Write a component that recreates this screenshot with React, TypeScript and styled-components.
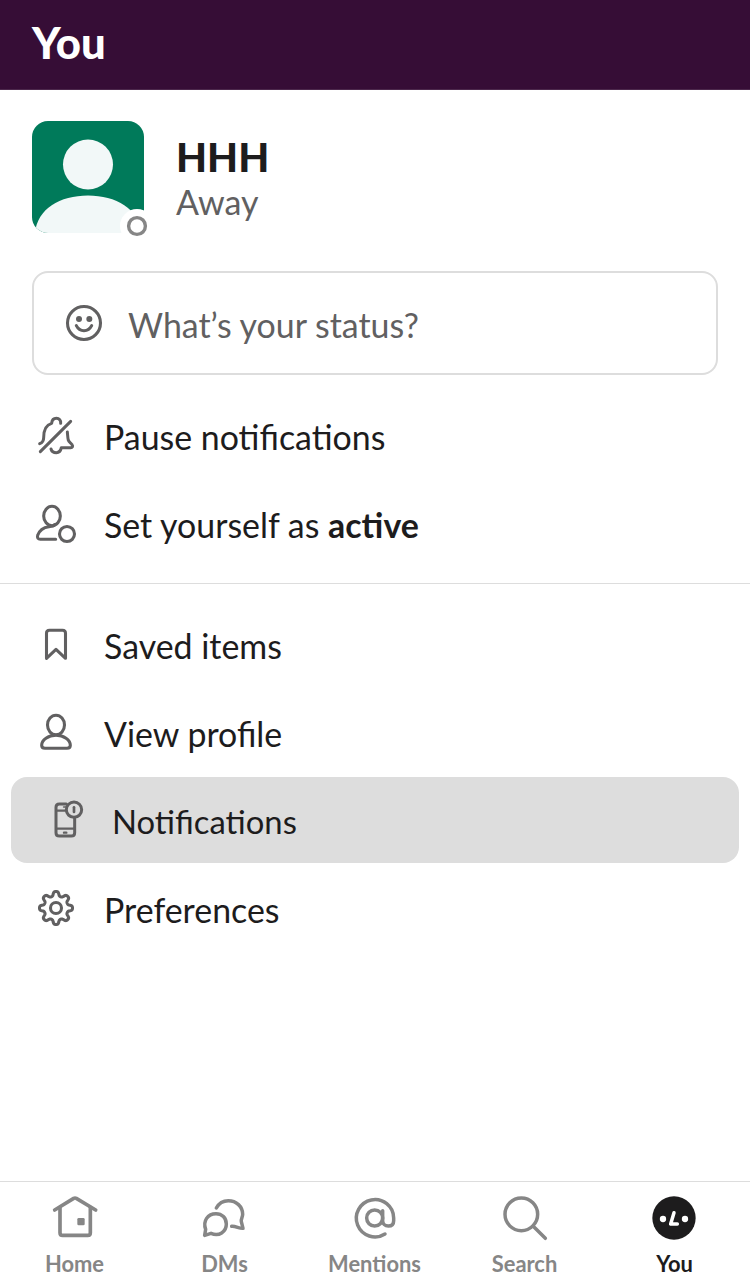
import React from 'react';
import styled, { createGlobalStyle } from 'styled-components';

const GlobalStyle = createGlobalStyle`
  * { box-sizing: border-box; }
  body {
    margin: 0;
    background: #fff;
    font-family: Lato, "Liberation Sans", sans-serif;
    color: #1d1c1d;
  }
`;

const Screen = styled.div`
  display: flex;
  flex-direction: column;
  width: 750px;
  height: 1280px;
  overflow: hidden;
  background: #fff;
`;

const Header = styled.header`
  height: 90px;
  padding: 16px 32px 0;
  background: #360d36;
  border-bottom: 1px solid #4c284c;
`;

const Title = styled.h1`
  margin: 0;
  color: #fff;
  font-size: 43.7px;
  font-weight: 900;
  line-height: 53px;
`;

const Profile = styled.section`
  display: flex;
  gap: 32px;
  padding: 31px 32px 0;
`;

const Avatar = styled.div`
  position: relative;
  width: 112px;
  height: 112px;
`;

const AvatarImage = styled.svg`
  display: block;
  width: 112px;
  height: 112px;
  border-radius: 16px;
`;

const Presence = styled.svg`
  position: absolute;
  left: 88px;
  top: 88px;
  width: 34px;
  height: 34px;
`;

const Identity = styled.div`
  padding-top: 12px;
`;

const Name = styled.div`
  font-size: 40.2px;
  font-weight: 900;
  line-height: 48px;
`;

const PresenceLabel = styled.div`
  color: #616061;
  font-size: 34px;
  line-height: 42px;
`;

const StatusField = styled.button`
  display: flex;
  align-items: center;
  gap: 20px;
  width: 686px;
  height: 104px;
  margin: 38px 32px 0;
  padding: 0 26px;
  border: 2px solid #dddddd;
  border-radius: 16px;
  background: #fff;
  color: #616061;
  font: inherit;
  font-size: 33.9px;
`;

const StatusPrompt = styled.span`
  padding-top: 4px;
`;

const Menu = styled.nav<{ $top: number }>`
  display: flex;
  flex-direction: column;
  padding-top: ${(p) => p.$top}px;
`;

const MenuRow = styled.a<{ $active?: boolean }>`
  display: flex;
  align-items: center;
  gap: 24px;
  height: ${(p) => (p.$active ? 86 : 88)}px;
  margin: ${(p) => (p.$active ? '0 11px 1px' : '0')};
  padding: 0 ${(p) => (p.$active ? 29 : 32)}px;
  border-radius: ${(p) => (p.$active ? 16 : 0)}px;
  background: ${(p) => (p.$active ? '#dddddd' : 'transparent')};
  font-size: ${(p) => (p.$active ? 32.8 : 33.9)}px;
`;

const MenuLabel = styled.span<{ $drop?: number }>`
  padding-top: ${(p) => p.$drop ?? 2}px;
`;

const Divider = styled.hr`
  width: 100%;
  height: 1px;
  margin: 15px 0 0;
  border: 0;
  background: #dddddd;
`;

const TabBar = styled.footer`
  display: grid;
  grid-template-columns: repeat(5, 1fr);
  height: 99px;
  margin-top: auto;
  border-top: 1px solid #dddddd;
`;

const Tab = styled.a<{ $active?: boolean }>`
  display: flex;
  flex-direction: column;
  align-items: center;
  padding: 12px 1px 0 0;
  color: ${(p) => (p.$active ? '#1d1c1d' : '#868686')};
  font-size: 21.9px;
  font-weight: 700;
  line-height: 26px;
  gap: 9px;
`;

const Glyph = styled.svg<{ $color?: string; $weight?: number }>`
  flex: none;
  width: 48px;
  height: 48px;
  color: ${(p) => p.$color ?? '#616061'};
  fill: none;
  stroke: currentColor;
  stroke-width: ${(p) => p.$weight ?? 9.2};
  stroke-linecap: round;
  stroke-linejoin: round;
`;

const TabGlyph = styled(Glyph)`
  position: relative;
  left: 0.5px;
`;

const SmileIcon = () => (
  <Glyph viewBox="120 117 144 144">
    <circle cx="192" cy="189" r="49.5" />
    <circle cx="177" cy="177" r="9" fill="currentColor" stroke="none" />
    <circle cx="208" cy="177" r="9" fill="currentColor" stroke="none" />
    <path d="M169 197c5 10 13 15 23 15s18-5 23-15" />
  </Glyph>
);

const BellOffIcon = () => (
  <Glyph viewBox="36 36 144 144" $weight={9}>
    <path d="M59 131c8-3 12-9 12-18 0-21 5-38 24-43 1-10 6-15 14-15 9 0 14 6 13 15" />
    <path d="M61 155L152 64" />
    <path d="M142 96c1 9 1 17 3 25 2 6 8 8 11 13 4 5 1 9-4 9h-28c-2 10-7 15-15 15s-14-4-16-11" />
  </Glyph>
);

const ActiveIcon = () => (
  <Glyph viewBox="36 300 144 144">
    <ellipse cx="96" cy="348" rx="25" ry="29" />
    <path d="M107 418H61c-7 0-10-5-8-12 5-15 18-24 34-26 10-2 16-1 17-6" />
    <circle cx="141" cy="402" r="22.5" />
  </Glyph>
);

const BookmarkIcon = () => (
  <Glyph viewBox="36 33 144 144">
    <path d="M79.500 145V70q0-9 9-9h39q9 0 9 9v75L108 118z" />
  </Glyph>
);

const PersonIcon = () => (
  <Glyph viewBox="36 297 144 144">
    <ellipse cx="108" cy="345" rx="25.500" ry="29.500" />
    <path d="M108 376c23 0 43 13 43 30 0 6-4 9-10 9H75c-6 0-10-3-10-9 0-17 20-30 43-30z" />
  </Glyph>
);

const PhoneAlertIcon = () => (
  <Glyph viewBox="120 93 144 144" $weight={9}>
    <path d="M199 117h-21q-10 0-10 10v76q0 10 10 10h36q10 0 10-10v-43" />
    <path d="M170 137h27M170 191h52" strokeWidth="7" />
    <path d="M191 126h6" strokeWidth="5" />
    <path d="M192 203h7" strokeWidth="7" />
    <circle cx="222" cy="134" r="23" />
    <path d="M222 127v14" strokeWidth="8" />
  </Glyph>
);

/* Eight-lobed cog outline: a flattened wave wrapped around a circle. */
const cogPath =
  Array.from({ length: 192 }, (_, i) => {
    const angle = (i / 192) * Math.PI * 2;
    const wave = Math.tanh(1.7 * Math.cos(8 * angle)) / Math.tanh(1.7);
    const radius = 43 + 6.5 * wave;
    const x = 108 + radius * Math.cos(angle);
    const y = 99 + radius * Math.sin(angle);
    return `${i ? 'L' : 'M'}${x.toFixed(2)} ${y.toFixed(2)}`;
  }).join('') + 'Z';

const CogIcon = () => (
  <Glyph viewBox="36 27 144 144">
    <path d={cogPath} />
    <circle cx="108" cy="99" r="16.500" />
  </Glyph>
);

const HomeIcon = () => (
  <TabGlyph viewBox="153 72 144 144" $color="#868686" $weight={11}>
    <path d="M164 120L221 85q4-2 8 0L287 120" />
    <path d="M180 112v76q0 8 8 8h75q8 0 8-8v-76" />
    <rect x="232" y="144" width="22" height="22" rx="4" fill="currentColor" stroke="none" />
  </TabGlyph>
);

const MessagesIcon = () => (
  <TabGlyph viewBox="603 72 144 144" $color="#868686" $weight={10.5}>
    <path d="M649 114c8-15 20-22 36-22 24 0 43 18 43 41 0 9-6 14-4 22l5 20c-12 1-21-7-34-6" />
    <path d="M617 178c-9-25 6-47 31-47 18 0 31 13 31 31 0 24-22 38-46 28l-19 6z" />
  </TabGlyph>
);

const AtIcon = () => (
  <TabGlyph viewBox="153 72 144 144" $color="#868686" $weight={10.5}>
    <path d="M255 192A56 56 0 1 1 281 144v8c0 10-6 16-16 16s-17-6-17-16v-30" />
    <circle cx="224" cy="144" r="24" />
  </TabGlyph>
);

const SearchIcon = () => (
  <TabGlyph viewBox="603 72 144 144" $color="#868686" $weight={10.5}>
    <circle cx="664" cy="133" r="49" />
    <path d="M699 168l37 37" />
  </TabGlyph>
);

const FaceIcon = () => (
  <TabGlyph viewBox="153 72 144 144" $color="#1d1c1d">
    <circle cx="222" cy="144" r="65" fill="currentColor" stroke="none" />
    <circle cx="189" cy="147" r="9.500" fill="#fff" stroke="none" />
    <circle cx="255" cy="147" r="9.500" fill="#fff" stroke="none" />
    <path d="M222 128l-10 34h20" stroke="#fff" strokeWidth="10.5" />
  </TabGlyph>
);

export default function App() {
  return (
    <>
      <GlobalStyle />
      <Screen>
        <Header>
          <Title>You</Title>
        </Header>
        <Profile>
          <Avatar>
            <AvatarImage viewBox="0 0 112 112">
              <rect width="112" height="112" fill="#007a5a" />
              <circle cx="56" cy="43.500" r="25" fill="#f2f8f8" />
              <path d="M3 112C5 88 28 74.500 56 74.500S107 88 109 112z" fill="#f2f8f8" />
            </AvatarImage>
            <Presence viewBox="0 0 34 34">
              <circle cx="17" cy="17" r="17" fill="#fff" />
              <circle cx="17" cy="17" r="8.4" fill="none" stroke="#868686" strokeWidth="3.4" />
            </Presence>
          </Avatar>
          <Identity>
            <Name>HHH</Name>
            <PresenceLabel>Away</PresenceLabel>
          </Identity>
        </Profile>
        <StatusField>
          <SmileIcon />
          <StatusPrompt>What’s your status?</StatusPrompt>
        </StatusField>
        <Menu $top={17}>
          <MenuRow><BellOffIcon /><MenuLabel>Pause notifications</MenuLabel></MenuRow>
          <MenuRow><ActiveIcon /><MenuLabel>Set yourself as <b>active</b></MenuLabel></MenuRow>
        </Menu>
        <Divider />
        <Menu $top={17}>
          <MenuRow><BookmarkIcon /><MenuLabel>Saved items</MenuLabel></MenuRow>
          <MenuRow><PersonIcon /><MenuLabel>View profile</MenuLabel></MenuRow>
          <MenuRow $active><PhoneAlertIcon /><MenuLabel>Notifications</MenuLabel></MenuRow>
          <MenuRow><CogIcon /><MenuLabel $drop={4}>Preferences</MenuLabel></MenuRow>
        </Menu>
        <TabBar>
          <Tab><HomeIcon />Home</Tab>
          <Tab><MessagesIcon />DMs</Tab>
          <Tab><AtIcon />Mentions</Tab>
          <Tab><SearchIcon />Search</Tab>
          <Tab $active><FaceIcon />You</Tab>
        </TabBar>
      </Screen>
    </>
  );
}
